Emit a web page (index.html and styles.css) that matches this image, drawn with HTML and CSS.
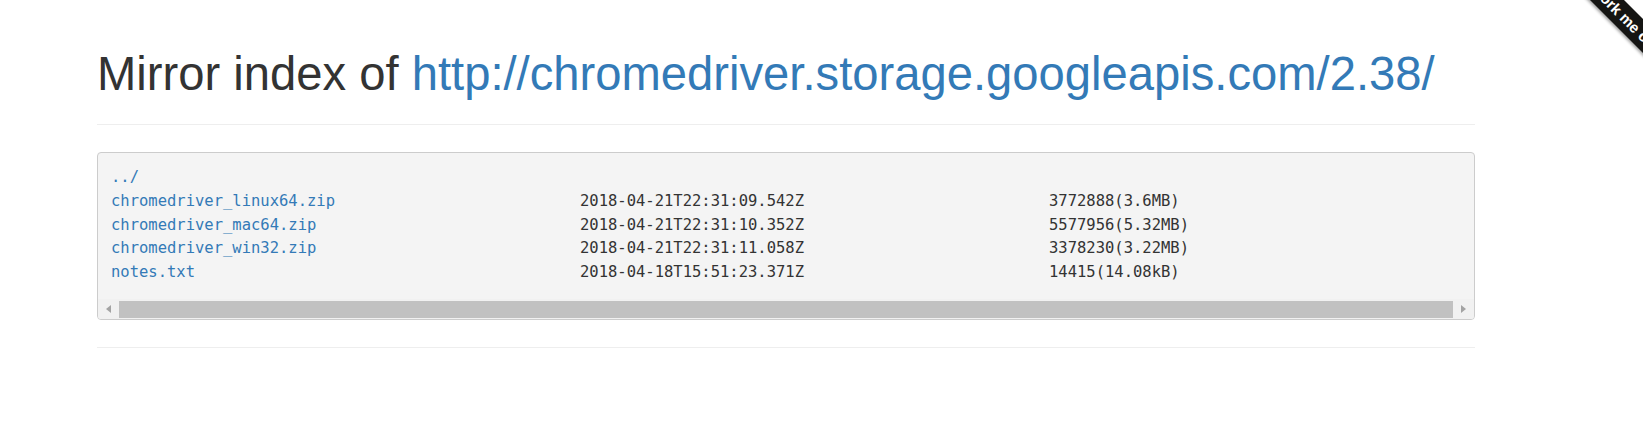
FILE: index.html
```html
<!DOCTYPE html>
<html>
<head>
<meta charset="utf-8">
<title>Mirror index</title>
<link rel="stylesheet" href="styles.css">
</head>
<body>
<div class="ribbon-wrap"><a class="ribbon" href="#">Fork me on GitHub</a></div>
<div class="page">
  <h1 class="title">Mirror index of <a href="#">http://chromedriver.storage.googleapis.com/2.38/</a></h1>
  <hr class="rule rule-top">
  <div class="listing">
    <div class="rows">
      <div class="row"><a href="#">../</a></div>
      <div class="row"><a href="#">chromedriver_linux64.zip</a><span>2018-04-21T22:31:09.542Z</span><span>3772888(3.6MB)</span></div>
      <div class="row"><a href="#">chromedriver_mac64.zip</a><span>2018-04-21T22:31:10.352Z</span><span>5577956(5.32MB)</span></div>
      <div class="row"><a href="#">chromedriver_win32.zip</a><span>2018-04-21T22:31:11.058Z</span><span>3378230(3.22MB)</span></div>
      <div class="row"><a href="#">notes.txt</a><span>2018-04-18T15:51:23.371Z</span><span>14415(14.08kB)</span></div>
    </div>
    <div class="hscroll">
      <span class="sb-btn"><span class="arrow arrow-left"></span></span>
      <span class="thumb"></span>
      <span class="sb-btn"><span class="arrow arrow-right"></span></span>
    </div>
  </div>
  <hr class="rule rule-bottom">
</div>
</body>
</html>
```
FILE: styles.css
```css
body {
  margin: 0;
  background: #fff;
  font-family: "Liberation Sans", Arial, sans-serif;
  color: #333;
}

.page {
  margin-left: 97px;
  width: 1378px;
  padding-top: 47px;
}

.title {
  margin: 0;
  font-size: 47.2px;
  line-height: 53px;
  font-weight: 400;
  color: #333;
}

.title a {
  color: #337ab7;
  text-decoration: none;
}

.rule {
  border: 0;
  border-top: 1px solid #eee;
  height: 0;
  margin: 0;
}

.rule-top {
  margin-top: 24px;
}

.rule-bottom {
  margin-top: 27px;
}

.listing {
  margin-top: 27px;
  border: 1px solid #ccc;
  border-radius: 4px;
  background: #f4f4f4;
  overflow: hidden;
}

.rows {
  padding: 13px 13px 0;
  font-family: "DejaVu Sans Mono", "Liberation Mono", monospace;
  font-size: 15.5px;
  line-height: 23.8px;
  color: #333;
}

.row {
  display: grid;
  grid-template-columns: 469px 469px auto;
  white-space: pre;
  height: 23.8px;
}

.row a {
  color: #337ab7;
  text-decoration: none;
}

.hscroll {
  margin-top: 14px;
  height: 20px;
  background: #f1f1f1;
  display: flex;
}

.sb-btn {
  width: 21px;
  flex: none;
  display: flex;
  align-items: center;
  justify-content: center;
}

.thumb {
  flex: 1;
  margin-top: 2px;
  height: 17px;
  background: #c1c1c1;
}

.arrow {
  width: 0;
  height: 0;
  border-top: 4.5px solid transparent;
  border-bottom: 4.5px solid transparent;
}

.arrow-left {
  border-right: 5px solid #a3a3a3;
}

.arrow-right {
  border-left: 5px solid #a3a3a3;
}

.ribbon-wrap {
  position: absolute;
  top: 0;
  right: 0;
  width: 150px;
  height: 150px;
  overflow: hidden;
}

.ribbon {
  position: absolute;
  left: 1px;
  top: 25px;
  width: 300px;
  height: 24px;
  background: #151513;
  color: #fff;
  transform: rotate(45deg);
  font: 700 15px/24px "Liberation Sans", Arial, sans-serif;
  text-align: center;
  text-decoration: none;
  box-shadow: 0 2px 3px rgba(0, 0, 0, 0.35);
}
```
